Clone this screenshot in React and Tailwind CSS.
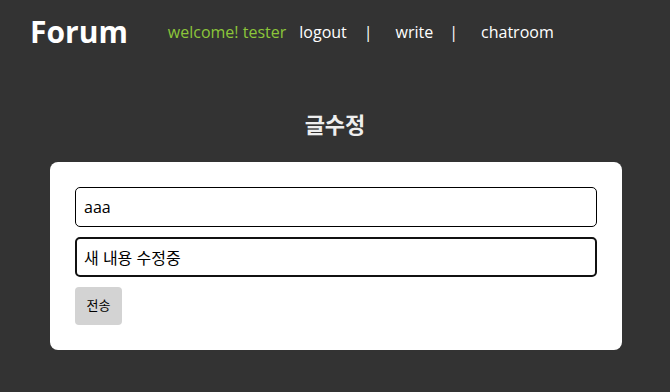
import React from 'react';

export default function App() {
  return (
    <div
      className="min-h-[392px] bg-[#333333] text-white"
      style={{ fontFamily: '"Open Sans", "Noto Sans", "Noto Sans CJK KR", sans-serif' }}
    >
      <nav className="flex items-center h-[64px] pl-[30px]">
        <h1 className="text-[30px] font-bold leading-none">Forum</h1>
        <span className="ml-[40px] text-[16px] text-[#8cc63a]">welcome! tester</span>
        <span className="ml-[13px] text-[16px]">logout</span>
        <span className="ml-[17px] text-[16px]">|</span>
        <span className="ml-[23px] text-[16px]">write</span>
        <span className="ml-[16px] text-[16px]">|</span>
        <span className="ml-[23px] text-[16px]">chatroom</span>
      </nav>

      <h2 className="mt-[49px] text-center text-[22px] font-bold text-[#eeeeee] leading-none">글수정</h2>

      <div className="ml-[50px] mr-[48px] mt-[27px] bg-white rounded-[8px] px-[25px] py-[25px]">
        <input
          defaultValue="aaa"
          className="block w-full h-[40px] border border-black rounded-[5px] px-[8px] text-[16px] text-black outline-none"
        />
        <input
          defaultValue="새 내용 수정중"
          className="block w-full h-[40px] mt-[10px] border-2 border-[#111111] rounded-[5px] px-[7px] text-[16px] text-black outline-none"
        />
        <button className="mt-[10px] w-[47px] h-[38px] bg-[#d3d3d3] rounded-[4px] text-[13px] text-black">
          전송
        </button>
      </div>
    </div>
  );
}
